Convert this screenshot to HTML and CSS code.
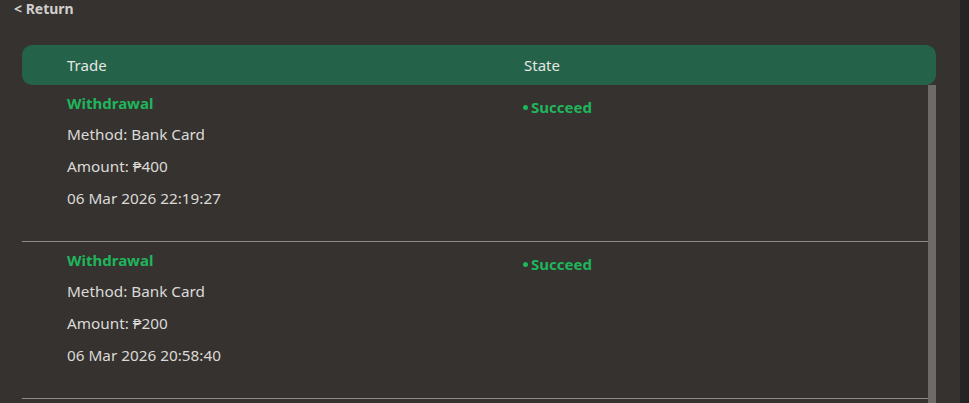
FILE: index.html
```html
<!DOCTYPE html>
<html lang="en">
<head>
<meta charset="utf-8">
<title>Records</title>
<link rel="stylesheet" href="styles.css">
</head>
<body>
<div class="page">
  <main class="main">
    <a class="back" href="#">&lt; Return</a>
    <section class="table">
      <div class="thead">
        <div class="th">Trade</div>
        <div class="th">State</div>
      </div>
      <div class="tbody">
        <div class="rows">
          <div class="row">
            <div class="cell">
              <div class="type">Withdrawal</div>
              <div class="line first">Method: Bank Card</div>
              <div class="line">Amount: ₱400</div>
              <div class="line">06 Mar 2026 22:19:27</div>
            </div>
            <div class="cell"><span class="state"><span class="dot"></span>Succeed</span></div>
          </div>
          <div class="row">
            <div class="cell">
              <div class="type">Withdrawal</div>
              <div class="line first">Method: Bank Card</div>
              <div class="line">Amount: ₱200</div>
              <div class="line">06 Mar 2026 20:58:40</div>
            </div>
            <div class="cell"><span class="state"><span class="dot"></span>Succeed</span></div>
          </div>
        </div>
        <div class="scrollbar"></div>
      </div>
    </section>
  </main>
  <div class="edge"></div>
</div>
</body>
</html>
```

FILE: styles.css
```css
html, body {
  margin: 0;
  padding: 0;
  height: 100%;
  overflow: hidden;
}
body {
  background: #353230;
  font-family: "Noto Sans", "Open Sans", sans-serif;
  color: #dcdad7;
}
.page {
  display: flex;
  height: 100%;
}
.main {
  width: 960px;
  flex: none;
  display: flex;
  flex-direction: column;
}
.edge {
  flex: 1;
  background: #242424;
}
.back {
  display: block;
  margin: 0 0 0 14px;
  height: 20px;
  line-height: 18px;
  font-size: 14px;
  font-weight: 700;
  color: #d2d0cd;
  text-decoration: none;
}
.table {
  margin: 27px 0 0 22px;
  width: 914px;
  display: flex;
  flex-direction: column;
}
.thead {
  display: grid;
  grid-template-columns: 457px 1fr;
  height: 40px;
  align-items: center;
  background: #246349;
  border-radius: 10px;
}
.th {
  padding-left: 45px;
  font-size: 15px;
  color: #e6e6e4;
}
.tbody {
  display: flex;
}
.rows {
  flex: 1;
}
.scrollbar {
  width: 8px;
  height: 330px;
  background: #6d6b68;
}
.row {
  display: grid;
  grid-template-columns: 456px 1fr;
  height: 156px;
  border-bottom: 1px solid #8d8b88;
}
.cell {
  padding-left: 45px;
  padding-top: 8px;
}
.type {
  font-size: 15px;
  font-weight: 700;
  color: #1fb55b;
  line-height: 20px;
}
.line {
  font-size: 15.3px;
  line-height: 32px;
  color: #dcdad7;
}
.line.first {
  margin-top: 5px;
}
.state {
  display: inline-flex;
  align-items: center;
  font-size: 15px;
  font-weight: 700;
  color: #1fb55b;
  line-height: 22px;
}
.dot {
  width: 5px;
  height: 5px;
  border-radius: 50%;
  background: #1fb55b;
  margin-right: 3px;
  margin-top: 2px;
}
```
